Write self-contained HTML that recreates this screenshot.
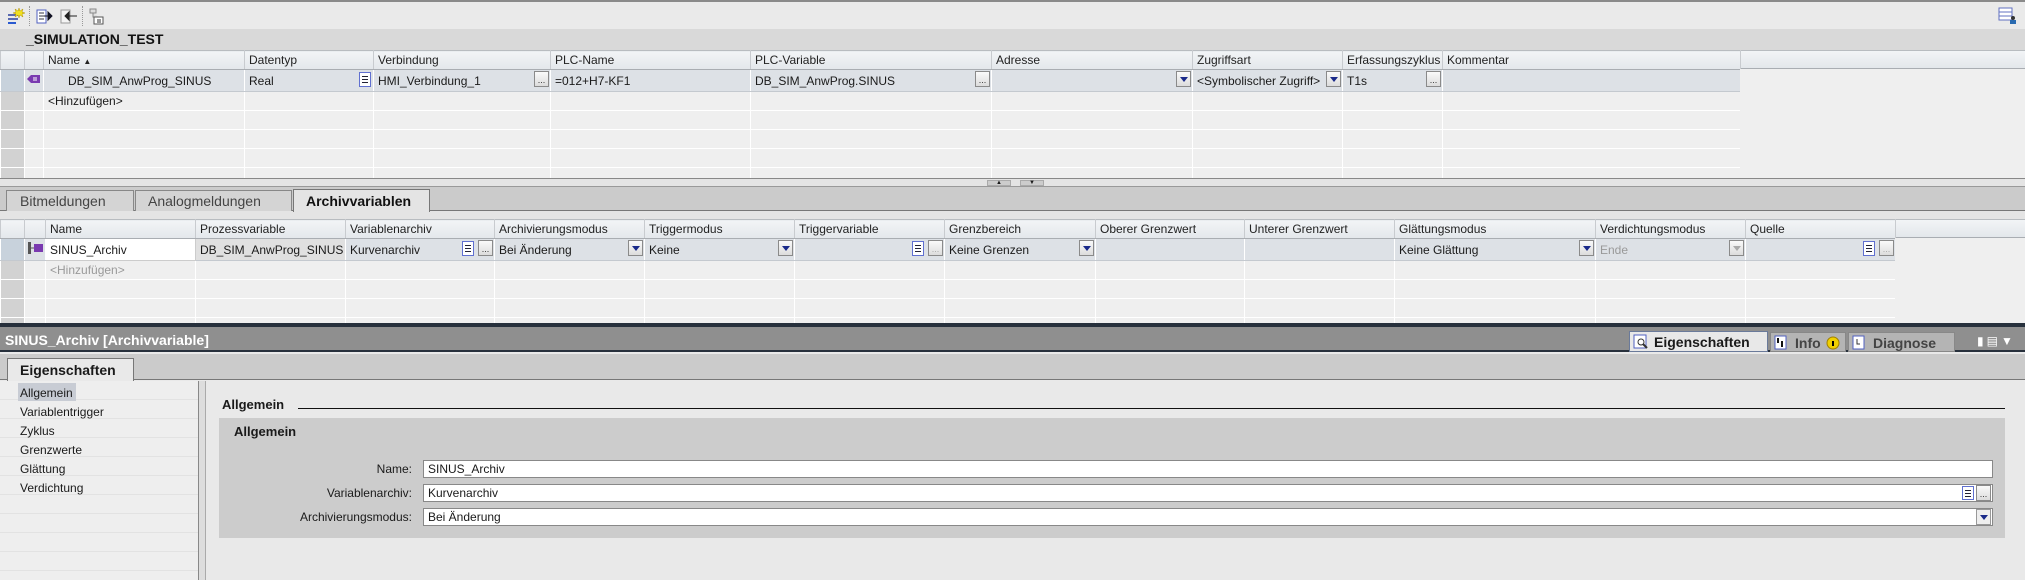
<!DOCTYPE html>
<html><head><meta charset="utf-8"><style>
*{box-sizing:border-box;margin:0;padding:0}
body{width:2025px;height:580px;overflow:hidden;background:#e9e9e9;font-family:"Liberation Sans",sans-serif;font-size:12px;color:#1a1a1a;position:relative}
.a{position:absolute}
table{border-collapse:collapse;table-layout:fixed;position:absolute}
td{height:19px;border:1px solid #fff;background:#efefef;padding:0 4px;white-space:nowrap;overflow:hidden;position:relative;font-size:12px}
tr.h td{background:linear-gradient(#f2f4f6,#e3e7eb);border-color:#c8cbcf;border-top:1px solid #b8bcc0;border-bottom:1px solid #a9adb2;color:#222}
td.s{background:#d2d2d2;padding:0}
tr.sel td{background:#dde1e6;border-bottom:1px solid #c4c9cf}
tr.sel td.s{background:#c8d2dc}
.dd{position:absolute;right:1px;top:1px;width:15px;height:16px;background:linear-gradient(#fafafa,#dcdcdc);border:1px solid #8a8a8a}
.dd:after{content:"";position:absolute;left:3px;top:5px;border-left:4px solid transparent;border-right:4px solid transparent;border-top:5px solid #1a2a8a}
.dd.g:after{border-top-color:#aaa}
.el{position:absolute;right:1px;top:1px;width:15px;height:16px;background:linear-gradient(#fafafa,#dcdcdc);border:1px solid #8a8a8a;font-size:9px;line-height:16px;text-align:center;color:#333}
.ls{position:absolute;top:2px;width:12px;height:15px;background:#fff;border:1px solid #6070d0}
.ls:after{content:"";position:absolute;left:2px;top:3px;width:6px;height:7px;background:repeating-linear-gradient(#223 0 1px,transparent 1px 3px)}
.sep{position:absolute;top:6px;width:1px;height:20px;border-left:1px dotted #999}
</style></head><body>
<div class="a" style="left:0;top:0;width:2025px;height:29px;background:#eaeaea;border-top:2px solid #8a8a8a"></div>
<svg class="a" style="left:6px;top:6px" width="110" height="20">
<rect x="2" y="8" width="10" height="2" fill="#5a6ab0"/><rect x="2" y="12" width="10" height="2" fill="#5a6ab0"/><rect x="2" y="16" width="8" height="2" fill="#2a5ad0"/>
<path d="M13 2l1 3 3-2-1 3 3 1-3 1 1 3-3-2-1 3-1-3-3 2 1-3-3-1 3-1-1-3 3 2z" fill="#f0e020" stroke="#b09000" stroke-width=".5"/>
<rect x="31" y="4" width="9" height="13" fill="#fff" stroke="#5060c0"/><path d="M33 7h5M33 10h5M33 13h5" stroke="#334"/><path d="M38 10h7M42 6l4 4-4 4z" fill="#112" stroke="#112"/>
<rect x="55" y="4" width="9" height="13" fill="#f4f4f4" stroke="#999"/><path d="M63 10h8M59 10l4-4v8z" fill="#222" stroke="#222"/>
<path d="M84 3h6v4h-6zM87 7v4h6" stroke="#888" fill="#ddd"/><rect x="88" y="11" width="9" height="7" fill="#fff" stroke="#555"/><path d="M92 13v4M94 13v4" stroke="#333"/>
</svg>
<div class="sep" style="left:29px"></div><div class="sep" style="left:82px"></div>
<svg class="a" style="left:1998px;top:7px" width="20" height="18"><rect x="1" y="1" width="13" height="12" fill="#fff" stroke="#6070c0"/><path d="M1 5h13M1 9h13" stroke="#6070c0"/><circle cx="15" cy="11" r="2" fill="#333"/><rect x="12" y="13" width="6" height="4" fill="#2a6ab0"/></svg>
<div class="a" style="left:0;top:29px;width:2025px;height:21px;background:#d9d9d9"></div>
<div class="a" style="left:26px;top:31px;font-size:14px;font-weight:bold;color:#111">_SIMULATION_TEST</div>
<div class="a" style="left:1740px;top:50px;width:285px;height:19px;background:linear-gradient(#f2f4f6,#e3e7eb);border-top:1px solid #b8bcc0;border-bottom:1px solid #a9adb2"></div>
<table style="left:0;top:50px;width:1740px">
<colgroup><col width="24"><col width="19"><col width="201"><col width="129"><col width="177"><col width="200"><col width="241"><col width="201"><col width="150"><col width="100"><col width="298"></colgroup>
<tr class="h"><td class="s"></td><td></td><td>Name <span style="font-size:8px">&#9650;</span></td><td>Datentyp</td><td>Verbindung</td><td>PLC-Name</td><td>PLC-Variable</td><td>Adresse</td><td>Zugriffsart</td><td>Erfassungszyklus</td><td>Kommentar</td></tr>
<tr class="sel"><td class="s"></td><td style="padding:0"><svg width="18" height="18"><path d="M2 9l4-4h9v8h-9z" fill="#7a3ab0"/><path d="M9 7v4M11 7v4" stroke="#fff"/></svg></td><td style="padding-left:24px">DB_SIM_AnwProg_SINUS</td><td>Real<span class="ls" style="right:2px"></span></td><td>HMI_Verbindung_1<span class="el">...</span></td><td>=012+H7-KF1</td><td>DB_SIM_AnwProg.SINUS<span class="el">...</span></td><td><span class="dd"></span></td><td>&lt;Symbolischer Zugriff&gt;<span class="dd"></span></td><td>T1s<span class="el">...</span></td><td></td></tr>
<tr><td class="s"></td><td></td><td>&lt;Hinzufügen&gt;</td><td></td><td></td><td></td><td></td><td></td><td></td><td></td><td></td></tr>
<tr><td class="s"></td><td></td><td></td><td></td><td></td><td></td><td></td><td></td><td></td><td></td><td></td></tr>
<tr><td class="s"></td><td></td><td></td><td></td><td></td><td></td><td></td><td></td><td></td><td></td><td></td></tr>
<tr><td class="s"></td><td></td><td></td><td></td><td></td><td></td><td></td><td></td><td></td><td></td><td></td></tr>
<tr><td class="s" style="height:13px"></td><td style="height:13px"></td><td></td><td></td><td></td><td></td><td></td><td></td><td></td><td></td><td></td></tr>
</table>
<div class="a" style="left:1740px;top:69px;width:285px;height:109px;background:#efefef"></div>
<div class="a" style="left:0;top:178px;width:2025px;height:9px;background:#e4e4e4;border-top:1px solid #888;border-bottom:1px solid #999"></div>
<div class="a" style="left:987px;top:180px;width:24px;height:6px;background:#ccc;border:1px solid #aaa;font-size:6px;line-height:5px;text-align:center">&#9650;</div>
<div class="a" style="left:1020px;top:180px;width:24px;height:6px;background:#ccc;border:1px solid #aaa;font-size:6px;line-height:5px;text-align:center">&#9660;</div>
<div class="a" style="left:0;top:187px;width:2025px;height:24px;background:#cbcbcb;border-bottom:1px solid #777"></div>
<div class="a" style="left:0;top:211px;width:2025px;height:8px;background:#e4e4e4"></div>
<div class="a" style="left:6px;top:190px;width:128px;height:21px;background:#d4d4d4;border:1px solid #888;border-bottom:none;font-size:14px;color:#444;padding:2px 0 0 13px">Bitmeldungen</div>
<div class="a" style="left:135px;top:190px;width:157px;height:21px;background:#d4d4d4;border:1px solid #888;border-bottom:none;font-size:14px;color:#444;padding:2px 0 0 12px">Analogmeldungen</div>
<div class="a" style="left:293px;top:189px;width:137px;height:23px;background:#e4e4e4;border:1px solid #777;border-bottom:none;font-size:14px;font-weight:bold;color:#111;padding:3px 0 0 12px">Archivvariablen</div>
<div class="a" style="left:1895px;top:219px;width:130px;height:19px;background:linear-gradient(#f2f4f6,#e3e7eb);border-top:1px solid #b8bcc0;border-bottom:1px solid #a9adb2"></div>
<table style="left:0;top:219px;width:1895px">
<colgroup><col width="24"><col width="21"><col width="150"><col width="150"><col width="149"><col width="150"><col width="150"><col width="150"><col width="151"><col width="149"><col width="150"><col width="201"><col width="150"><col width="150"></colgroup>
<tr class="h"><td class="s"></td><td></td><td>Name</td><td>Prozessvariable</td><td>Variablenarchiv</td><td>Archivierungsmodus</td><td>Triggermodus</td><td>Triggervariable</td><td>Grenzbereich</td><td>Oberer Grenzwert</td><td>Unterer Grenzwert</td><td>Glättungsmodus</td><td>Verdichtungsmodus</td><td>Quelle</td></tr>
<tr class="sel"><td class="s"></td><td style="padding:0"><svg width="20" height="18"><rect x="3" y="3" width="3" height="12" fill="#555"/><path d="M6 9h3" stroke="#555"/><rect x="9" y="5" width="9" height="8" fill="#7a3ab0"/></svg></td><td style="background:#fff;border:1px solid #ccc">SINUS_Archiv</td><td style="background:#e0e0e0">DB_SIM_AnwProg_SINUS</td><td>Kurvenarchiv<span class="ls" style="right:20px"></span><span class="el">...</span></td><td>Bei Änderung<span class="dd"></span></td><td>Keine<span class="dd"></span></td><td><span class="ls" style="right:20px"></span><span class="el" style="color:#aaa">...</span></td><td>Keine Grenzen<span class="dd"></span></td><td></td><td></td><td>Keine Glättung<span class="dd"></span></td><td style="color:#999">Ende<span class="dd g"></span></td><td><span class="ls" style="right:20px"></span><span class="el" style="color:#aaa">...</span></td></tr>
<tr><td class="s"></td><td></td><td style="color:#999">&lt;Hinzufügen&gt;</td><td></td><td></td><td></td><td></td><td></td><td></td><td></td><td></td><td></td><td></td><td></td></tr>
<tr><td class="s"></td><td></td><td></td><td></td><td></td><td></td><td></td><td></td><td></td><td></td><td></td><td></td><td></td><td></td></tr>
<tr><td class="s"></td><td></td><td></td><td></td><td></td><td></td><td></td><td></td><td></td><td></td><td></td><td></td><td></td><td></td></tr>
<tr><td class="s" style="height:10px"></td><td style="height:10px"></td><td></td><td></td><td></td><td></td><td></td><td></td><td></td><td></td><td></td><td></td><td></td><td></td></tr>
</table>
<div class="a" style="left:1895px;top:238px;width:130px;height:86px;background:#efefef"></div>
<div class="a" style="left:0;top:323px;width:2025px;height:4px;background:#27303c"></div>
<div class="a" style="left:0;top:327px;width:2025px;height:25px;background:#8f8f8f;border-bottom:2px solid #27303c"></div>
<div class="a" style="left:5px;top:332px;font-size:14px;font-weight:bold;color:#fff">SINUS_Archiv [Archivvariable]</div>
<div class="a" style="left:1629px;top:331px;width:139px;height:21px;background:#e8e8e8;border:1px solid #6a7a9a;font-size:14px;font-weight:bold;padding:2px 0 0 24px">Eigenschaften</div>
<svg class="a" style="left:1633px;top:334px" width="16" height="16"><rect x="1" y="1" width="12" height="13" fill="#fff" stroke="#5060c0"/><circle cx="8" cy="8" r="3" fill="none" stroke="#333"/><path d="M10 10l4 4" stroke="#333" stroke-width="2"/></svg>
<div class="a" style="left:1770px;top:332px;width:76px;height:20px;background:#b4b4b4;border:1px solid #888;font-size:14px;font-weight:bold;color:#444;padding:2px 0 0 24px">Info</div>
<svg class="a" style="left:1774px;top:335px" width="70" height="16"><rect x="1" y="1" width="11" height="13" fill="#fff" stroke="#5060c0"/><path d="M4 3v5M8 6v6" stroke="#111" stroke-width="2"/><circle cx="59" cy="8" r="6" fill="#f0d000" stroke="#a08000"/><path d="M59 6v5" stroke="#000" stroke-width="2"/></svg>
<div class="a" style="left:1848px;top:332px;width:107px;height:20px;background:#b4b4b4;border:1px solid #888;font-size:14px;font-weight:bold;color:#444;padding:2px 0 0 24px">Diagnose</div>
<svg class="a" style="left:1852px;top:335px" width="14" height="16"><rect x="1" y="1" width="11" height="13" fill="#fff" stroke="#5060c0"/><path d="M5 4v5h3" stroke="#333" fill="none"/></svg>
<div class="a" style="left:1977px;top:334px;color:#fff;font-size:12px;letter-spacing:3px">&#9646;&#9636;&#9660;</div>
<div class="a" style="left:0;top:354px;width:2025px;height:26px;background:#cbcbcb;border-bottom:1px solid #777"></div>
<div class="a" style="left:7px;top:358px;width:127px;height:23px;background:#e9e9e9;border:1px solid #777;border-bottom:none;font-size:14px;font-weight:bold;padding:3px 0 0 12px">Eigenschaften</div>
<div class="a" style="left:0;top:381px;width:198px;height:199px;background:repeating-linear-gradient(#eeeeee 0 18px,#e2e2e2 18px 19px)"></div>
<div class="a" style="left:18px;top:383px;width:58px;height:18px;background:#c8ccd4"></div>
<div class="a" style="left:20px;top:384px;line-height:19px;font-size:12px">Allgemein<br>Variablentrigger<br>Zyklus<br>Grenzwerte<br>Glättung<br>Verdichtung</div>
<div class="a" style="left:198px;top:381px;width:8px;height:199px;background:#ddd;border-left:1px solid #888;border-right:1px solid #aaa"></div>
<div class="a" style="left:222px;top:397px;font-size:13px;font-weight:bold">Allgemein</div>
<div class="a" style="left:298px;top:408px;width:1707px;height:1px;background:#111"></div>
<div class="a" style="left:219px;top:418px;width:1786px;height:120px;background:#cccccc"></div>
<div class="a" style="left:234px;top:424px;font-size:13px;font-weight:bold">Allgemein</div>
<div class="a" style="left:250px;top:457px;width:162px;text-align:right;line-height:24px">Name:<br>Variablenarchiv:<br>Archivierungsmodus:</div>
<div class="a" style="left:423px;top:460px;width:1570px;height:18px;background:#fff;border:1px solid #888;padding:1px 4px">SINUS_Archiv</div>
<div class="a" style="left:423px;top:484px;width:1570px;height:18px;background:#fff;border:1px solid #888;padding:1px 4px">Kurvenarchiv<span class="ls" style="right:18px;top:1px;height:14px"></span><span class="el" style="top:0;height:16px">...</span></div>
<div class="a" style="left:423px;top:508px;width:1570px;height:18px;background:#fff;border:1px solid #888;padding:1px 4px">Bei Änderung<span class="dd" style="top:0;background:#eee;border-color:#999"></span></div>
</body></html>
